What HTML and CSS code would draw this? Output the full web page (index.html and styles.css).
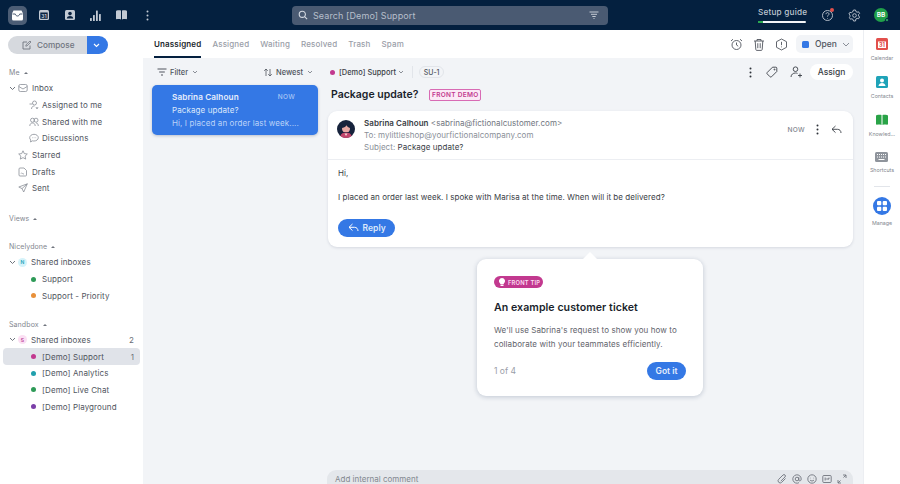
FILE: index.html
```html
<!DOCTYPE html>
<html lang="en">
<head>
<meta charset="utf-8">
<title>Front</title>
<link rel="stylesheet" href="styles.css">
</head>
<body>
<div class="app">
  <header class="topbar">
    <nav class="top-icons">
      <span class="top-btn active"><svg width="13" height="13" viewBox="0 0 13 13"><path d="M1 4.500 2.500 1.500h8L12 4.500v5.500a1.500 1.500 0 0 1-1.500 1.500h-8A1.500 1.500 0 0 1 1 10z" fill="#fff"/><path d="M1.500 5h2.800c.3 1.300 1.100 2 2.200 2s1.900-.7 2.200-2h2.800" fill="none" stroke="#4c5d75" stroke-width="1"/></svg></span>
      <span class="top-btn"><svg width="12" height="12" viewBox="0 0 12 12"><rect x="1" y="1" width="10" height="10" rx="1.500" fill="#c3cad4"/><rect x="2.300" y="3.500" width="7.400" height="6.300" fill="#0a2240"/><text x="6" y="9" font-size="5" font-weight="700" text-anchor="middle" font-family="Inter" fill="#c3cad4">31</text></svg></span>
      <span class="top-btn"><svg width="12" height="12" viewBox="0 0 12 12"><rect x="1" y="1" width="10" height="10" rx="1.500" fill="#c3cad4"/><circle cx="6" cy="4.600" r="1.800" fill="#0a2240"/><path d="M2.800 9.500c.3-1.700 1.500-2.400 3.200-2.400s2.900.7 3.200 2.400z" fill="#0a2240"/></svg></span>
      <span class="top-btn"><svg width="13" height="13" viewBox="0 0 13 13" fill="#c3cad4"><rect x="1" y="9" width="1.800" height="3" rx=".5"/><rect x="4" y="6" width="1.800" height="6" rx=".5"/><rect x="7" y="1.500" width="1.800" height="10.500" rx=".5"/><rect x="10" y="5" width="1.800" height="7" rx=".5"/></svg></span>
      <span class="top-btn"><svg width="13" height="12" viewBox="0 0 13 12" fill="#c3cad4"><path d="M6 1.500V10.500C4.500 10 3 10 1.800 10.300 1.300 10.400 1 10 1 9.600V2.500C1 2 1.300 1.600 1.800 1.500 3 1.200 4.500 1.100 6 1.500z"/><path d="M7 1.500V10.500c1.500-.5 3-.5 4.200-.2.500.1.800-.3.800-.7V2.500c0-.5-.3-.9-.8-1C10 1.200 8.500 1.100 7 1.500z"/></svg></span>
      <span class="top-btn"><svg width="3" height="11" viewBox="0 0 3 11" fill="#c3cad4"><circle cx="1.500" cy="1.500" r="1"/><circle cx="1.500" cy="5.500" r="1"/><circle cx="1.500" cy="9.500" r="1"/></svg></span>
    </nav>
    <div class="search">
      <svg width="10" height="10" viewBox="0 0 10 10" fill="none" stroke="#d5dae2" stroke-width="1.100"><circle cx="4.300" cy="4.300" r="3.100"/><path d="m6.600 6.600 2.500 2.500"/></svg>
      <span class="search-text">Search [Demo] Support</span>
      <svg class="search-filter" width="10" height="8" viewBox="0 0 10 8" fill="none" stroke="#c3cad4" stroke-width="1"><path d="M.5 1h9M2 3.300h6M3.300 5.500h3.400M4.500 7.500h1"/></svg>
    </div>
    <div class="top-right">
      <div class="setup">
        <span class="setup-text">Setup guide</span>
        <span class="setup-bar"><span class="setup-fill"></span></span>
      </div>
      <span class="help"><svg width="13" height="13" viewBox="0 0 13 13" fill="none" stroke="#c3cad4" stroke-width=".9"><circle cx="6.500" cy="6.500" r="5"/><path d="M5 5.200c0-1 .7-1.600 1.500-1.600s1.500.6 1.500 1.400c0 1.200-1.500 1.200-1.500 2.600M6.500 9v.6"/></svg><i class="help-dot"></i></span>
      <svg class="gear" width="13" height="13" viewBox="0 0 13 13" fill="none" stroke="#c3cad4" stroke-width=".9"><path d="M5.500 1h2l.4 1.500 1.200.7 1.500-.4 1 1.700-1.100 1.100v1.300l1.100 1.100-1 1.700-1.500-.4-1.200.7L7.500 12h-2l-.4-1.500-1.200-.7-1.500.4-1-1.700L2 7.400V6.100L.9 5l1-1.700 1.500.4 1.200-.7z"/><circle cx="6.500" cy="6.500" r="1.800"/></svg>
      <span class="me">BB<i class="me-dot"></i></span>
    </div>
  </header>

  <div class="body">
    <aside class="sidebar">
      <div class="compose">
        <span class="compose-main"><svg width="10" height="10" viewBox="0 0 10 10" fill="none" stroke="#70757e" stroke-width=".9"><path d="M8 5.500V9H1V2h4"/><path d="M3.800 6.200 4 4.800 8 1l1 1-4 3.900z" stroke-width=".8"/></svg>Compose</span>
        <span class="compose-more"><svg width="7" height="5" viewBox="0 0 7 5" fill="none" stroke="#fff" stroke-width="1.100"><path d="m1 1 2.500 2.500L6 1"/></svg></span>
      </div>

      <div class="section-head first">Me <i class="caret"></i></div>
      <div class="row lvl1">
        <svg class="tree" width="7" height="5" viewBox="0 0 7 5" fill="none" stroke="#70757e"><path d="m1 1 2.500 2.500L6 1"/></svg>
        <svg class="ico" width="10" height="10" viewBox="0 0 10 10" fill="none" stroke="#8a8f98" stroke-width=".8"><rect x=".8" y="1.500" width="8.400" height="7" rx="1.500"/><path d="m.8 3.500 4.200 2.500 4.200-2.500"/></svg>
        <span>Inbox</span>
      </div>
      <div class="row lvl2"><svg class="ico" width="10" height="10" viewBox="0 0 10 10" fill="none" stroke="#8a8f98" stroke-width=".8"><circle cx="5.500" cy="3" r="2"/><path d="M2.500 9c0-2 1.300-3 3-3M.5 4h3M7 7l1 2 1-2"/></svg><span>Assigned to me</span></div>
      <div class="row lvl2"><svg class="ico" width="10" height="10" viewBox="0 0 10 10" fill="none" stroke="#8a8f98" stroke-width=".8"><circle cx="3.500" cy="3.200" r="2"/><circle cx="7" cy="3.200" r="2"/><path d="M.8 9c0-2 1.200-3 2.700-3s2.700 1 2.700 3M7 6c1.300 0 2.300 1 2.300 3"/></svg><span>Shared with me</span></div>
      <div class="row lvl2"><svg class="ico" width="10" height="10" viewBox="0 0 10 10" fill="none" stroke="#8a8f98" stroke-width=".8"><path d="M5 1.300c2.400 0 4.300 1.500 4.300 3.400S7.400 8 5 8c-.6 0-1 0-1.500-.2L1.500 9l.3-2C1 6.400.7 5.600.7 4.700.7 2.800 2.600 1.300 5 1.300z"/><path d="M3 4.700h.5M4.800 4.700h.5M6.600 4.700h.5"/></svg><span>Discussions</span></div>
      <div class="row lvl1b"><svg class="ico" width="10" height="10" viewBox="0 0 10 10" fill="none" stroke="#8a8f98" stroke-width=".8"><path d="m5 .8 1.300 2.800 3 .4-2.200 2.100.6 3L5 7.600 2.300 9.100l.6-3L.7 4l3-.4z"/></svg><span>Starred</span></div>
      <div class="row lvl1b"><svg class="ico" width="10" height="10" viewBox="0 0 10 10" fill="none" stroke="#8a8f98" stroke-width=".8"><path d="M2 1h4l2.500 2.500V8a1 1 0 0 1-1 1H2a1 1 0 0 1-1-1V2a1 1 0 0 1 1-1z"/><path d="M3 6.500c.6-.7 1-.7 1.500 0s1 .5 1.500 0"/></svg><span>Drafts</span></div>
      <div class="row lvl1b"><svg class="ico" width="10" height="10" viewBox="0 0 10 10" fill="none" stroke="#8a8f98" stroke-width=".8"><path d="M9.300.8.800 4l3.200 1.600L5.700 9zM4 5.600 9.300.8"/></svg><span>Sent</span></div>

      <div class="section-head views">Views <i class="caret"></i></div>

      <div class="section-head group">Nicelydone <i class="caret"></i></div>
      <div class="row lvl1">
        <svg class="tree" width="7" height="5" viewBox="0 0 7 5" fill="none" stroke="#70757e"><path d="m1 1 2.500 2.500L6 1"/></svg>
        <span class="badge badge-n">N</span>
        <span>Shared inboxes</span>
      </div>
      <div class="row lvl2"><i class="dot green"></i><span>Support</span></div>
      <div class="row lvl2"><i class="dot orange"></i><span>Support - Priority</span></div>

      <div class="section-head group tight">Sandbox <i class="caret"></i></div>
      <div class="row lvl1">
        <svg class="tree" width="7" height="5" viewBox="0 0 7 5" fill="none" stroke="#70757e"><path d="m1 1 2.500 2.500L6 1"/></svg>
        <span class="badge badge-s">S</span>
        <span>Shared inboxes</span>
        <span class="count">2</span>
      </div>
      <div class="row lvl2 selected"><i class="dot pink"></i><span>[Demo] Support</span><span class="count">1</span></div>
      <div class="row lvl2"><i class="dot teal"></i><span>[Demo] Analytics</span></div>
      <div class="row lvl2"><i class="dot green"></i><span>[Demo] Live Chat</span></div>
      <div class="row lvl2"><i class="dot purple"></i><span>[Demo] Playground</span></div>
    </aside>

    <main class="main">
      <div class="tabs">
        <span class="tab current">Unassigned</span>
        <span class="tab">Assigned</span>
        <span class="tab">Waiting</span>
        <span class="tab">Resolved</span>
        <span class="tab">Trash</span>
        <span class="tab">Spam</span>
        <div class="tab-actions">
          <svg width="13" height="13" viewBox="0 0 13 13" fill="none" stroke="#50555e" stroke-width=".9"><circle cx="6.500" cy="7" r="4.500"/><path d="M6.500 4.500V7l1.700 1.200M1 3l2-1.800M12 3l-2-1.800"/></svg>
          <svg width="12" height="13" viewBox="0 0 12 13" fill="none" stroke="#50555e" stroke-width=".9"><path d="M1 3h10M4 3V1.500h4V3M2.200 3l.6 8.500a1 1 0 0 0 1 .9h4.400a1 1 0 0 0 1-.9L9.800 3M4.800 5.200v5M7.200 5.200v5"/></svg>
          <svg width="13" height="13" viewBox="0 0 13 13" fill="none" stroke="#50555e" stroke-width=".9"><path d="M6.500 1 11.500 3.700v5.600L6.500 12l-5-2.700V3.700z"/><path d="M6.500 3.800v3.400M6.500 8.500v.8"/></svg>
          <span class="status"><i class="status-box"></i>Open<svg width="8" height="5" viewBox="0 0 8 5" fill="none" stroke="#8a8f98"><path d="m1 1 3 3 3-3"/></svg></span>
        </div>
      </div>

      <div class="workspace">
        <section class="list">
          <div class="list-tools">
            <span class="tool"><svg width="10" height="8" viewBox="0 0 10 8" fill="none" stroke="#50555e"><path d="M.5 1h9M2.200 4h5.600M4 7h2"/></svg>Filter<svg class="chev" width="6" height="4" viewBox="0 0 6 4" fill="none" stroke="#70757e" stroke-width=".8"><path d="m1 1 2 2 2-2"/></svg></span>
            <span class="tool"><svg class="sort" width="8" height="9" viewBox="1 0 8 9" fill="none" stroke="#50555e" stroke-width=".8"><path d="M3 8V1M1.200 2.800 3 1l1.800 1.800M7 1v7M5.200 6.200 7 8l1.800-1.800"/></svg>Newest<svg class="chev" width="6" height="4" viewBox="0 0 6 4" fill="none" stroke="#70757e" stroke-width=".8"><path d="m1 1 2 2 2-2"/></svg></span>
          </div>
          <article class="conv-item">
            <div class="conv-top"><b>Sabrina Calhoun</b><span class="conv-time">NOW</span></div>
            <div>Package update?</div>
            <div class="conv-snippet">Hi, I placed an order last week....</div>
          </article>
        </section>

        <section class="detail">
          <div class="detail-tools">
            <i class="dot pink"></i>
            <span class="inbox-name">[Demo] Support</span>
            <svg class="chev" width="6" height="4" viewBox="0 0 6 4" fill="none" stroke="#70757e" stroke-width=".8"><path d="m1 1 2 2 2-2"/></svg>
            <i class="divider"></i>
            <span class="ref">SU-1</span>
            <div class="detail-actions">
              <svg class="more" width="3" height="11" viewBox="0 0 3 11" fill="#2e323a"><circle cx="1.500" cy="1.500" r="1"/><circle cx="1.500" cy="5.500" r="1"/><circle cx="1.500" cy="9.500" r="1"/></svg>
              <svg width="12" height="12" viewBox="0 0 12 12" fill="none" stroke="#3a3e46" stroke-width=".9"><path d="M6.500 1.200h3.300a1 1 0 0 1 1 1v3.300L5.500 10.800a1 1 0 0 1-1.400 0L1.200 7.900a1 1 0 0 1 0-1.400z"/><circle cx="8.500" cy="3.500" r=".5"/></svg>
              <svg width="13" height="12" viewBox="0 0 13 12" fill="none" stroke="#3a3e46" stroke-width=".9"><circle cx="5.500" cy="3.200" r="2.300"/><path d="M1 11c.2-2.600 2-4 4.500-4 .8 0 1.400.1 2 .4M10 7.500v4M8 9.500h4"/></svg>
              <span class="assign">Assign</span>
            </div>
          </div>
          <div class="title-row">
            <h1>Package update?</h1>
            <span class="demo-tag">FRONT DEMO</span>
          </div>
          <article class="message">
            <div class="msg-head">
              <svg class="avatar" width="18" height="18" viewBox="0 0 18 18"><circle cx="9" cy="9" r="9" fill="#17233c"/><path d="M5 8.500C5 6 6.800 5 9 5s4 1 4 3.500c0 1.500-.6 2.800-1.500 3.500h-5C5.600 11.300 5 10 5 8.500z" fill="#e8a9a4"/><path d="M4.500 8C6.500 8 8.500 7 9.500 5.300 10.500 7 12 8 13.500 8 13.500 4.500 11.500 3 9 3S4.500 4.500 4.500 8z" fill="#17233c"/><path d="M3.300 16C4 13.600 6 12.500 9 12.500s5 1.100 5.700 3.500A9 9 0 0 1 9 18a9 9 0 0 1-5.700-2z" fill="#c2456c"/><path d="M7.500 13.500h3l-1.500 2.500z" fill="#f2d6d0"/></svg>
              <div class="msg-meta">
                <div class="msg-from"><b>Sabrina Calhoun</b> &lt;sabrina@fictionalcustomer.com&gt;</div>
                <div class="msg-to">To: mylittleshop@yourfictionalcompany.com</div>
                <div class="msg-to">Subject: <span class="msg-subject">Package update?</span></div>
              </div>
              <div class="msg-actions">
                <span class="msg-time">NOW</span>
                <svg width="3" height="11" viewBox="0 0 3 11" fill="#2e323a"><circle cx="1.500" cy="1.500" r="1"/><circle cx="1.500" cy="5.500" r="1"/><circle cx="1.500" cy="9.500" r="1"/></svg>
                <svg width="11" height="9" viewBox="0 0 11 9" fill="none" stroke="#3a3e46" stroke-width=".9"><path d="M4.500 1 1 4.300 4.500 7.600M1 4.300h5.500c2 0 3.500 1.400 3.500 3.700"/></svg>
              </div>
            </div>
            <div class="msg-body">
              <p>Hi,</p>
              <p>I placed an order last week. I spoke with Marisa at the time. When will it be delivered?</p>
              <span class="reply"><svg width="11" height="9" viewBox="0 0 11 9" fill="none" stroke="#fff" stroke-width="1"><path d="M4.500 1 1 4.300 4.500 7.600M1 4.300h5.500c2 0 3.500 1.400 3.500 3.700"/></svg>Reply</span>
            </div>
          </article>
          <div class="comment">
            <span>Add internal comment</span>
            <div class="comment-icons">
              <svg width="10" height="10" viewBox="0 0 10 10" fill="none" stroke="#70757e" stroke-width=".9"><path d="M8.500 4.500 4.700 8.300a2 2 0 0 1-3-3L6 1a1.400 1.400 0 0 1 2 2L3.800 7.100"/></svg>
              <svg width="10" height="10" viewBox="0 0 10 10" fill="none" stroke="#70757e" stroke-width=".9"><circle cx="5" cy="5" r="1.800"/><path d="M6.800 3.200V6c0 1.400 2.400 1.400 2.400-1A4.200 4.200 0 1 0 7 8.700"/></svg>
              <svg width="10" height="10" viewBox="0 0 10 10" fill="none" stroke="#70757e" stroke-width=".9"><circle cx="5" cy="5" r="4.200"/><path d="M3 6c1 1.300 3 1.300 4 0M3.400 3.800v.5M6.600 3.800v.5"/></svg>
              <svg width="10" height="10" viewBox="0 0 10 10" fill="none" stroke="#70757e" stroke-width=".9"><rect x=".8" y="1.500" width="8.400" height="7" rx="1"/><path d="M2.500 4.200h1.500M2.500 5.800h1.500M5 4.200v1.600M6.300 4.200h1.400M6.300 5.800v-1.600"/></svg>
              <svg width="10" height="10" viewBox="0 0 10 10" fill="none" stroke="#70757e" stroke-width=".9"><path d="M6 1h3v3M9 1 6.500 3.500M4 9H1V6M1 9l2.500-2.500"/></svg>
            </div>
          </div>
        </section>
      </div>

      <aside class="tip">
        <i class="tip-arrow"></i>
        <span class="tip-label"><svg width="6" height="8" viewBox="0 0 6 8" fill="#fff"><path d="M3 0a3 3 0 0 1 1.800 5.400V6H1.200v-.6A3 3 0 0 1 3 0zM1.500 6.600h3V8h-3z"/></svg>FRONT TIP</span>
        <h2>An example customer ticket</h2>
        <p>We'll use Sabrina's request to show you how to collaborate with your teammates efficiently.</p>
        <div class="tip-foot"><span class="tip-count">1 of 4</span><span class="got">Got it</span></div>
      </aside>
    </main>

    <aside class="rail">
      <div class="rail-item"><svg width="12" height="12" viewBox="0 0 12 12"><rect width="12" height="12" rx="1.500" fill="#e2504c"/><rect x="2" y="3.500" width="8" height="6.500" fill="#fff"/><text x="6" y="9.300" font-size="5.500" font-weight="700" text-anchor="middle" font-family="Inter" fill="#e2504c">31</text></svg><span>Calendar</span></div>
      <div class="rail-item"><svg width="12" height="12" viewBox="0 0 12 12"><rect width="12" height="12" rx="1.500" fill="#1fa3b8"/><circle cx="6" cy="4.400" r="2" fill="#fff"/><path d="M2.500 10c.3-2 1.700-3 3.500-3s3.200 1 3.500 3z" fill="#fff"/></svg><span>Contacts</span></div>
      <div class="rail-item"><svg width="12" height="12" viewBox="0 0 12 12" fill="#29a347"><path d="M5.500 1v10C4 10.500 2.500 10.500 1 10.700.500 10.800 0 10.400 0 9.900V2C0 1.500.400 1.100 1 1 2.500.8 4 .6 5.500 1z"/><path d="M6.500 1v10c1.500-.5 3-.5 4.500-.3.500.1 1-.3 1-.8V2c0-.5-.4-.9-1-1C9.500.8 8 .6 6.500 1z"/></svg><span>Knowled...</span></div>
      <div class="rail-item"><svg width="13" height="10" viewBox="0 0 13 10"><rect width="13" height="10" rx="1.500" fill="#8f949c"/><path d="M2 2.500h9M2 5h9" stroke="#fff" stroke-width="1" stroke-dasharray="1 1"/><path d="M3.500 7.500h6" stroke="#fff"/></svg><span>Shortcuts</span></div>
      <i class="rail-sep"></i>
      <div class="rail-item"><span class="manage"><svg width="10" height="10" viewBox="0 0 10 10" fill="#fff"><rect width="4.300" height="4.300" rx="1"/><rect x="5.700" width="4.300" height="4.300" rx="1"/><rect y="5.700" width="4.300" height="4.300" rx="1"/><rect x="5.700" y="5.700" width="4.300" height="4.300" rx="1"/></svg></span><span>Manage</span></div>
    </aside>
  </div>
</div>
</body>
</html>
```
FILE: styles.css
```css
* { box-sizing: border-box; }
html, body { margin: 0; height: 100%; overflow: hidden; }
body { font-family: Inter, "Liberation Sans", sans-serif; font-size: 8px; color: #3a3e46; background: #fff; }
i { display: block; font-style: normal; }
svg { display: block; flex: none; }

.app { width: 900px; height: 484px; display: flex; flex-direction: column; }

/* Top bar */
.topbar { height: 30px; flex: none; background: #04203f; display: flex; align-items: center; position: relative; }
.top-icons { display: flex; gap: 7px; padding-left: 8px; width: 292px; }
.top-btn { width: 19px; height: 19px; border-radius: 5px; display: flex; align-items: center; justify-content: center; }
.top-btn.active { background: #4c5d75; }
.search { width: 316px; height: 19px; background: #4a5a72; border-radius: 4px; display: flex; align-items: center; padding: 0 9px 0 6px; gap: 5px; }
.search-text { color: #b7bfcb; font-size: 9px; letter-spacing: .1px; }
.search-filter { margin-left: auto; }
.top-right { flex: 1; display: flex; align-items: center; padding-left: 150px; }
.setup { width: 48px; display: flex; flex-direction: column; gap: 3px; }
.setup-text { color: #bfc6d0; font-size: 8.200px; font-weight: 500; line-height: 11px; white-space: nowrap; letter-spacing: .2px; }
.setup-bar { height: 2px; background: #f2f4f7; display: block; border-radius: 1px; }
.setup-fill { display: block; width: 5px; height: 2px; background: #2aa851; }
.help { position: relative; margin-left: 15px; }
.help-dot { position: absolute; right: 0; top: -1px; width: 4px; height: 4px; border-radius: 50%; background: #e2504c; }
.gear { margin-left: 14px; }
.me { margin-left: 13px; width: 14px; height: 14px; border-radius: 50%; background: #20a04a; color: #fff; font-size: 6.500px; font-weight: 600; display: flex; align-items: center; justify-content: center; position: relative; }
.me-dot { position: absolute; right: -1px; bottom: 0; width: 4px; height: 4px; border-radius: 50%; background: #39c56a; border: 1px solid #04203f; }

.body { flex: 1; display: flex; min-height: 0; }

/* Sidebar */
.sidebar { width: 143px; flex: none; background: #fff; padding: 6px 3px 0; }
.compose { width: 100px; height: 18px; margin-left: 5px; display: flex; border-radius: 9px; overflow: hidden; }
.compose-main { width: 79px; background: #d6d9de; color: #70757e; font-size: 8.200px; font-weight: 500; display: flex; align-items: center; gap: 5px; padding-left: 14px; }
.compose-more { flex: 1; background: #3478e5; display: flex; align-items: center; justify-content: center; padding-right: 2px; }
.section-head { font-size: 7px; color: #83878f; height: 12px; line-height: 12px; padding-left: 6px; display: flex; align-items: center; gap: 4px; letter-spacing: .1px; }
.section-head.first { margin-top: 13px; }
.section-head.views { margin-top: 16px; }
.section-head.group { margin-top: 16.500px; }
.section-head.group.tight { margin-top: 14.600px; }
.caret { width: 0; height: 0; border-left: 2px solid transparent; border-right: 2px solid transparent; border-bottom: 2.500px solid #70757e; }
.row { height: 16.670px; display: flex; align-items: center; font-size: 8px; color: #50555e; white-space: nowrap; letter-spacing: .1px; border-radius: 4px; padding-right: 6px; }
.section-head + .row { margin-top: 1px; }
.lvl1 { padding-left: 6px; }
.lvl1b { padding-left: 15px; }
.lvl2 { padding-left: 26px; }
.tree { margin-right: 2px; }
.row .ico { margin-right: 4px; }
.lvl2 .ico { margin-right: 3px; }
.badge { width: 9px; height: 9px; border-radius: 50%; font-size: 5px; font-weight: 600; display: flex; align-items: center; justify-content: center; margin-right: 4px; }
.badge-n { background: #d5f3fa; color: #1fa3b8; }
.badge-s { background: #fbdff3; color: #b83d96; }
.count { margin-left: auto; font-size: 8px; color: #6a6e76; }
.dot { width: 5px; height: 5px; border-radius: 50%; flex: none; }
.row .dot { margin: 0 6px 0 2px; }
.green { background: #2e9a57; }
.orange { background: #e8903a; }
.pink { background: #c2398f; }
.teal { background: #21a0ad; }
.purple { background: #7b3fa8; }
.selected { background: #e0e3e9; }

/* Main */
.main { flex: 1; min-width: 0; display: flex; flex-direction: column; position: relative; background: #f2f4f7; }
.tabs { height: 28px; flex: none; background: #fff; display: flex; align-items: stretch; padding-left: 11px; gap: 11px; }
.tab { display: flex; align-items: center; font-size: 8px; font-weight: 500; color: #9a9ea8; letter-spacing: .15px; border-bottom: 2px solid transparent; padding-top: 2px; }
.tab.current { color: #1a1f2c; font-weight: 600; border-bottom-color: #04203f; letter-spacing: .15px; }
.tab-actions { margin-left: auto; display: flex; align-items: center; gap: 10px; padding-right: 10px; }
.status { width: 57px; height: 18px; background: #f2f4f7; border-radius: 5px; display: flex; align-items: center; font-size: 8.500px; font-weight: 500; color: #50555e; padding-left: 6px; gap: 6px; margin-left: -2px; }
.status svg { margin-left: -1px; }
.status-box { width: 7px; height: 7px; border-radius: 1.500px; background: #3478e5; }

.workspace { flex: 1; min-height: 0; display: flex; }
.list { width: 182px; flex: none; padding: 6px 7px 0 9px; }
.list-tools { height: 16px; display: flex; align-items: center; justify-content: space-between; padding: 0 5px 0 5px; }
.tool { display: flex; align-items: center; gap: 3px; font-size: 7.500px; font-weight: 500; color: #50555e; }
.tool .chev { margin-left: 1px; }
.tool .sort { margin-right: 1px; }
.conv-item { margin-top: 5px; height: 50px; background: #3478e5; border-radius: 5px; box-shadow: 0 1px 3px rgba(20,40,80,.25); padding: 6px 23px 0 20px; color: #dce8fb; font-size: 8px; line-height: 13.200px; letter-spacing: .1px; }
.conv-top { display: flex; justify-content: space-between; align-items: center; }
.conv-top b { font-weight: 600; color: #e6eefc; font-size: 8.200px; }
.conv-time { font-size: 6.500px; color: #a9c6f5; letter-spacing: .3px; font-weight: 500; }
.conv-snippet { color: #bcd3f8; white-space: nowrap; }

.detail { flex: 1; min-width: 0; display: flex; flex-direction: column; padding: 6px 10px 0 3px; }
.detail-tools { height: 16px; display: flex; align-items: center; }
.detail-tools .dot { margin-left: 2px; margin-right: 4px; }
.inbox-name { font-size: 7.400px; font-weight: 500; letter-spacing: .05px; color: #3a3e46; white-space: nowrap; }
.detail-tools .chev { margin-left: 2px; }
.divider { width: 1px; height: 12px; background: #e2e5ea; margin: 0 6px 0 8px; }
.ref { width: 25px; height: 12px; border: 1px solid #e2e5ea; border-radius: 6px; font-size: 7px; font-weight: 500; color: #50555e; display: flex; align-items: center; justify-content: center; }
.detail-actions { margin-left: auto; display: flex; align-items: center; gap: 12px; }
.more { margin-right: 2px; }
.assign { width: 43px; height: 16px; border-radius: 8px; background: #fff; font-size: 8.500px; font-weight: 500; color: #3a3e46; display: flex; align-items: center; justify-content: center; margin-left: -5px; }
.title-row { display: flex; align-items: center; gap: 11px; height: 21px; margin-top: 4px; padding-left: 3px; }
h1 { margin: 0; font-size: 10.500px; font-weight: 600; color: #1a1f2c; white-space: nowrap; }
.demo-tag { width: 52px; height: 12px; border: 1px solid #d86bb4; border-radius: 2px; background: #fbeaf6; color: #c2398f; font-size: 6.500px; font-weight: 600; display: flex; align-items: center; justify-content: center; letter-spacing: .3px; white-space: nowrap; }
.message { margin-top: 6px; height: 136px; background: #fff; border-radius: 9px; box-shadow: 0 1px 3px rgba(20,40,80,.13); flex: none; }
.msg-head { height: 49px; border-bottom: 1px solid #eceef2; display: flex; padding: 6px 11px 0 9px; }
.avatar { margin-top: 3px; margin-right: 9px; }
.msg-meta { font-size: 8px; line-height: 12px; color: #8a8f98; letter-spacing: .05px; }
.msg-from { color: #70757e; white-space: nowrap; }
.msg-from b { font-weight: 600; color: #3a3e46; }
.msg-subject { color: #3a3e46; }
.msg-actions { margin-left: auto; display: flex; align-items: center; height: 14px; margin-top: 5.500px; gap: 12px; }
.msg-time { font-size: 6.600px; color: #83878f; font-weight: 500; letter-spacing: .3px; margin-right: -1px; }
.msg-body { padding: 8px 10px 7px; font-size: 8px; color: #3a3e46; letter-spacing: .05px; }
.msg-body p { margin: 0 0 12.500px; line-height: 11px; }
.reply { width: 57px; height: 18px; border-radius: 9px; background: #3478e5; color: #dce8fb; font-size: 8.500px; font-weight: 600; display: flex; align-items: center; gap: 4px; padding-left: 9.500px; margin-top: 16px; }
.comment { margin-top: auto; height: 14px; background: #e4e7eb; border-radius: 9px 9px 0 0; display: flex; align-items: center; padding: 3px 6px 0 8px; font-size: 8px; color: #83878f; margin-left: -1px; }
.comment-icons { margin-left: auto; display: flex; gap: 5px; }

/* Tip: floats over the conversation */
.tip { position: absolute; left: 334px; top: 229px; width: 226px; height: 137px; background: #fff; border-radius: 9px; box-shadow: 0 1px 5px rgba(20,40,80,.22); padding: 17px 17px 0; }
.tip-arrow { position: absolute; left: 106px; top: -7px; width: 0; height: 0; border-left: 7px solid transparent; border-right: 7px solid transparent; border-bottom: 7px solid #fff; }
.tip-label { width: 49px; height: 12px; border-radius: 6px; background: #c2398f; color: #fbdff3; font-size: 5.800px; font-weight: 600; display: flex; align-items: center; gap: 3px; padding-left: 5px; letter-spacing: .2px; white-space: nowrap; }
.tip h2 { margin: 13px 0 0; font-size: 10.600px; line-height: 14px; font-weight: 600; color: #1a1f2c; white-space: nowrap; letter-spacing: .05px; }
.tip p { margin: 7.500px 0 0; font-size: 8px; line-height: 14px; color: #5f636b; letter-spacing: .09px; }
.tip-foot { display: flex; justify-content: space-between; align-items: center; margin-top: 11.500px; }
.tip-count { color: #9a9ea8; font-size: 8.500px; }
.got { width: 39px; height: 18px; border-radius: 9px; background: #3478e5; color: #e6eefc; font-size: 8.500px; font-weight: 600; display: flex; align-items: center; justify-content: center; }

/* Right rail */
.rail { width: 37px; flex: none; background: #fff; border-left: 1px solid #eceef2; display: flex; flex-direction: column; align-items: center; padding-top: 8px; }
.rail-item { height: 38px; display: flex; flex-direction: column; align-items: center; gap: 5px; font-size: 5.300px; color: #83878f; white-space: nowrap; }
.rail-sep { width: 16px; height: 1px; background: #e2e5ea; margin: -4px 0 10px; }
.manage { width: 18px; height: 18px; border-radius: 50%; background: #3478e5; display: flex; align-items: center; justify-content: center; }
```
